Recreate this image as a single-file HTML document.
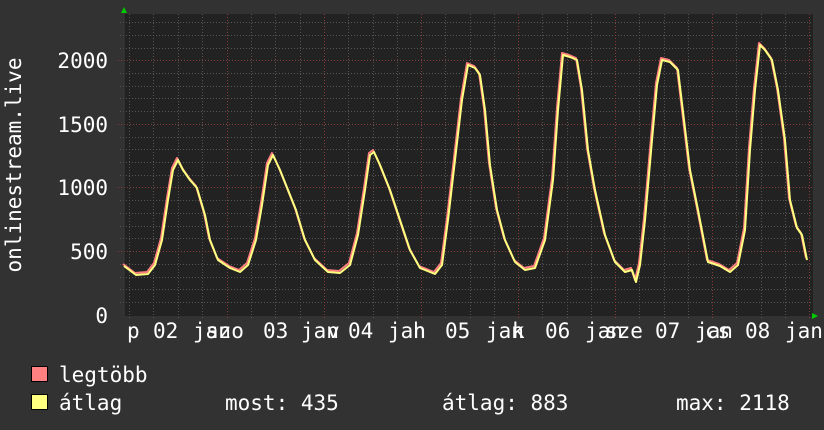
<!DOCTYPE html>
<html><head><meta charset="utf-8"><style>
html,body{margin:0;padding:0;background:#323232;}
svg{display:block}
text{font-family:"DejaVu Sans Mono","Liberation Mono",monospace;fill:#fff;font-size:21px}
</style></head><body>
<svg width="824" height="430" viewBox="0 0 824 430" xmlns="http://www.w3.org/2000/svg">
<rect width="824" height="430" fill="#323232"/>
<rect x="124" y="14" width="689" height="302" fill="#222"/>
<g stroke="#555" stroke-width="1" stroke-dasharray="1,2" fill="none">
<path d="M129.5 14V318M153.5 14V318M178.5 14V318M202.5 14V318M251.5 14V318M275.5 14V318M300.5 14V318M348.5 14V318M373.5 14V318M397.5 14V318M445.5 14V318M470.5 14V318M494.5 14V318M542.5 14V318M567.5 14V318M591.5 14V318M639.5 14V318M664.5 14V318M688.5 14V318M736.5 14V318M761.5 14V318M785.5 14V318"/>
<path d="M120 302.5H813M120 289.5H813M120 277.5H813M120 264.5H813M120 238.5H813M120 226.5H813M120 213.5H813M120 200.5H813M120 175.5H813M120 162.5H813M120 149.5H813M120 137.5H813M120 111.5H813M120 98.5H813M120 86.5H813M120 73.5H813M120 48.5H813M120 35.5H813M120 22.5H813"/>
</g>
<g stroke="#8a3b3b" stroke-width="1" stroke-dasharray="1,2" fill="none">
<path d="M227.5 14V320M324.5 14V320M421.5 14V320M518.5 14V320M615.5 14V320M712.5 14V320M809.5 14V320"/>
<path d="M118 251.5H813M118 187.5H813M118 124.5H813M118 60.5H813"/>
</g>
<line x1="124" y1="14" x2="124" y2="316" stroke="#3a3a3a"/>
<polygon points="121,13 127,13 124,7" fill="#0c0"/>
<polygon points="812,313 812,319 818,316" fill="#0c0"/>
<g fill="none" stroke-width="2" stroke-linejoin="round">
<polyline stroke="#ff7f80" transform="translate(-1,-2)" points="124,266 132,272 136,275 148,274 155,265 162,240 168,200 173,170 178,160 183,170 190,180 197,188 205,215 210,240 218,260 230,268 240,272 248,265 256,240 262,205 268,165 273,155 280,170 288,190 296,210 305,240 315,260 328,272 340,273 350,265 358,235 365,190 370,155 374,152 380,165 390,190 400,220 410,250 420,268 435,274 442,265 448,220 455,160 462,100 468,65 475,68 480,75 485,110 490,165 497,210 505,240 515,262 525,270 535,268 545,240 553,180 558,110 563,55 570,57 577,60 582,90 588,150 595,190 605,235 615,262 625,272 632,270 636,282 640,265 645,220 652,140 657,85 662,60 670,62 678,70 684,120 690,170 698,210 708,262 720,266 730,272 738,265 745,230 750,150 755,90 760,45 765,50 772,60 778,90 785,140 790,200 797,228 802,235 807,260"/>
<polyline stroke="#ffff80" points="124,266 132,272 136,275 148,274 155,265 162,240 168,200 173,170 178,160 183,170 190,180 197,188 205,215 210,240 218,260 230,268 240,272 248,265 256,240 262,205 268,165 273,155 280,170 288,190 296,210 305,240 315,260 328,272 340,273 350,265 358,235 365,190 370,155 374,152 380,165 390,190 400,220 410,250 420,268 435,274 442,265 448,220 455,160 462,100 468,65 475,68 480,75 485,110 490,165 497,210 505,240 515,262 525,270 535,268 545,240 553,180 558,110 563,55 570,57 577,60 582,90 588,150 595,190 605,235 615,262 625,272 632,270 636,282 640,265 645,220 652,140 657,85 662,60 670,62 678,70 684,120 690,170 698,210 708,262 720,266 730,272 738,265 745,230 750,150 755,90 760,45 765,50 772,60 778,90 785,140 790,200 797,228 802,235 807,260"/>
</g>
<g text-anchor="end">
<text x="108" y="323">0</text>
<text x="108" y="259">500</text>
<text x="108" y="195">1000</text>
<text x="108" y="132">1500</text>
<text x="108" y="68">2000</text>
</g>
<text transform="translate(21,165) rotate(-90)" text-anchor="middle">onlinestream.live</text>
<text x="127" y="338">p</text><text x="153" y="338">02</text><text x="193" y="338">jan</text>
<text x="206" y="338">szo</text><text x="263" y="338">03</text><text x="301" y="338">jan</text>
<text x="327" y="338">v</text><text x="348" y="338">04</text><text x="388" y="338">jan</text>
<text x="413" y="338">h</text><text x="445" y="338">05</text><text x="486" y="338">jan</text>
<text x="512" y="338">k</text><text x="545" y="338">06</text><text x="585" y="338">jan</text>
<text x="605" y="338">sze</text><text x="655" y="338">07</text><text x="695" y="338">jan</text>
<text x="705" y="338">cs</text><text x="745" y="338">08</text><text x="785" y="338">jan</text>
<rect x="31.5" y="366.5" width="16" height="15" fill="#ff8080" stroke="#000"/>
<rect x="31.5" y="394.5" width="16" height="15" fill="#ffff80" stroke="#000"/>
<text x="59" y="382">legtöbb</text>
<text x="59" y="410">átlag</text>
<text x="225" y="410">most: 435</text>
<text x="442" y="410">átlag: 883</text>
<text x="676" y="410">max: 2118</text>
</svg>
</body></html>
